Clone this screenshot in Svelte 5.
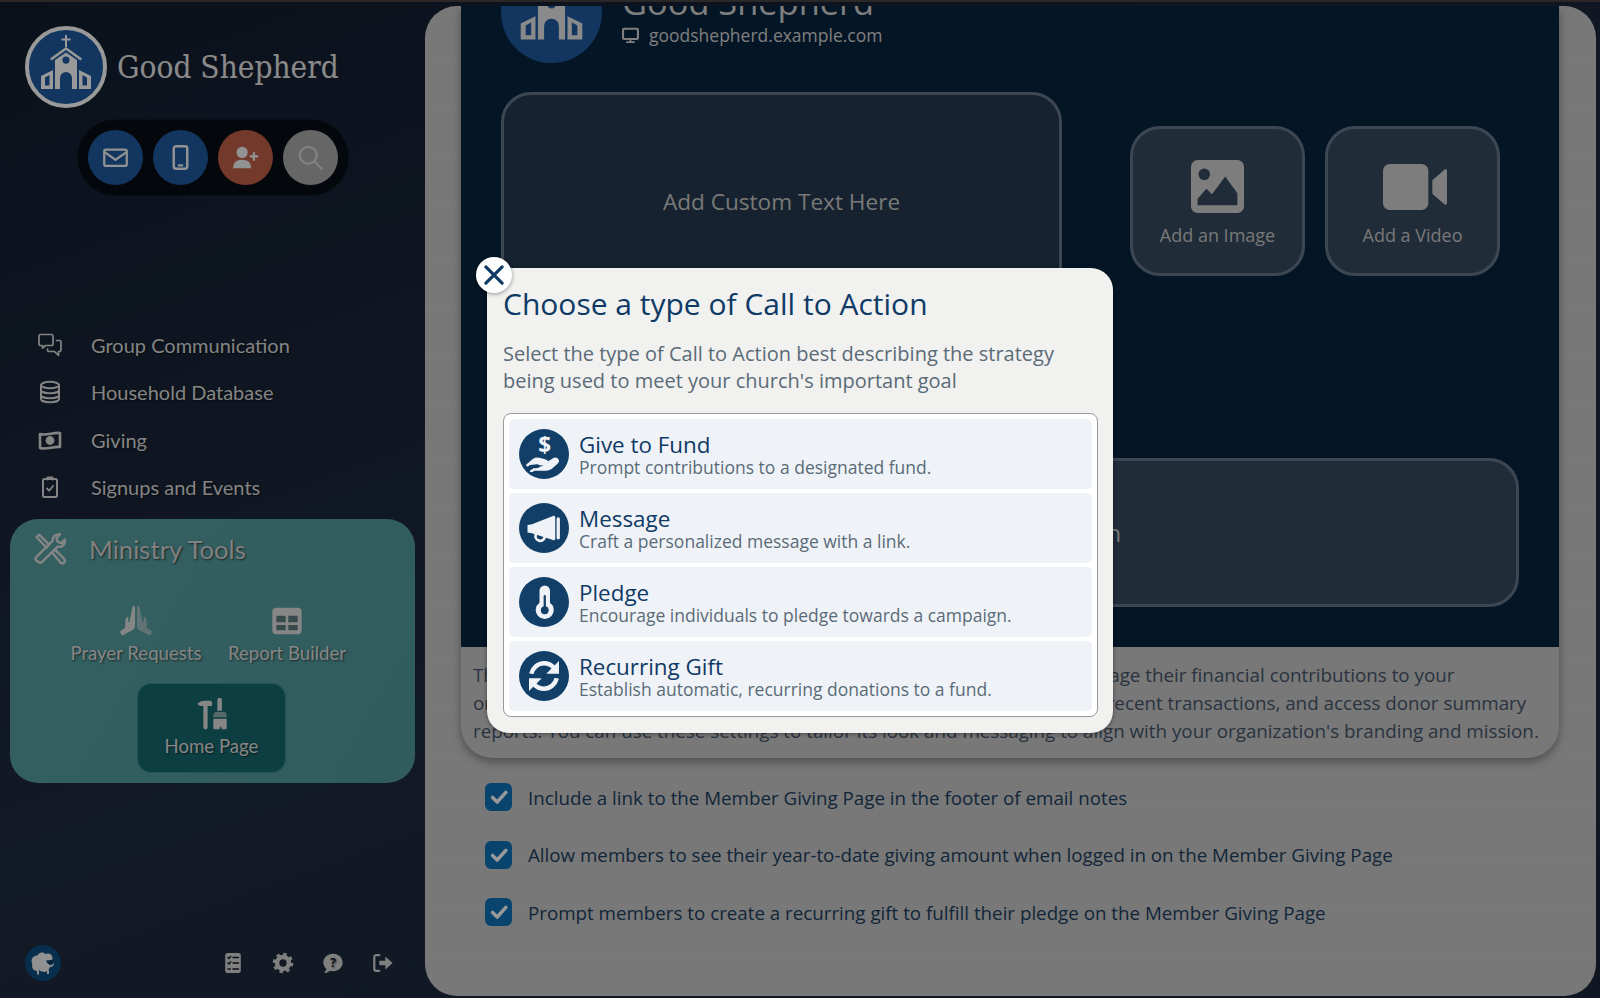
<script>
  const nav = [
    { label: "Group Communication", icon: "comments" },
    { label: "Household Database", icon: "database" },
    { label: "Giving", icon: "money" },
    { label: "Signups and Events", icon: "clipboard" },
  ];
  const tools = [
    { label: "Prayer Requests", icon: "hands" },
    { label: "Report Builder", icon: "table" },
    { label: "Home Page", icon: "hammer", active: true },
  ];
  const options = [
    "Include a link to the Member Giving Page in the footer of email notes",
    "Allow members to see their year-to-date giving amount when logged in on the Member Giving Page",
    "Prompt members to create a recurring gift to fulfill their pledge on the Member Giving Page",
  ];
  const types = [
    { title: "Give to Fund", sub: "Prompt contributions to a designated fund.", icon: "give" },
    { title: "Message", sub: "Craft a personalized message with a link.", icon: "megaphone" },
    { title: "Pledge", sub: "Encourage individuals to pledge towards a campaign.", icon: "thermo" },
    { title: "Recurring Gift", sub: "Establish automatic, recurring donations to a fund.", icon: "sync" },
  ];
</script>

{#snippet church(fill)}
  <svg viewBox="0 0 82 82" class="fillsvg">
    <g fill={fill}>
      <path d="M40 9h2v3.500h3.500v2H42V21h-2v-6.500h-3.500v-2H40z" />
      <path d="M25 32.500l16-11.500 16 11.500-1.500 1.900L41 24l-14.500 10.400z" />
      <path fill-rule="evenodd" d="M41 26.500l11 7.500v29H47V52a6 6 0 0 0-12 0v11H30V34zM41 30.500a3.600 3.600 0 1 0 0 7.200 3.600 3.600 0 0 0 0-7.200z" />
      <path fill-rule="evenodd" d="M28 44v19H16V50zM20 51.500v8h4.500v-10.500z" />
      <path fill-rule="evenodd" d="M54 44l12 6v13H54zM57.500 49v10.500H62v-8z" />
    </g>
  </svg>
{/snippet}

{#snippet ico(name)}
  <svg viewBox="0 0 24 24" class="ico" fill="none" stroke="currentColor" stroke-width="2" stroke-linecap="round" stroke-linejoin="round">
    {#if name === "mail"}
      <rect x="2" y="5" width="20" height="14.500" rx="1.500" />
      <path d="M2.500 7.500L12 14l9.500-6.500" />
    {:else if name === "phone"}
      <rect x="6" y="2" width="12" height="20" rx="2" stroke-width="2.200" />
      <path d="M10.500 19h3" />
    {:else if name === "userplus"}
      <circle cx="9" cy="7.500" r="5" fill="currentColor" stroke="none" />
      <path d="M1 21.500c0-5 3-7.500 8-7.500s8 2.500 8 7.500z" fill="currentColor" stroke="none" />
      <path d="M19.500 8v6M16.500 11h6" />
    {:else if name === "search"}
      <circle cx="10" cy="10" r="7.500" />
      <path d="M15.500 15.500L22 22" />
    {:else if name === "comments"}
      <path d="M2.500 1.500h11a1.500 1.500 0 0 1 1.500 1.500v8a1.500 1.500 0 0 1-1.500 1.500H7.500l-3 2.500v-2.500h-2A1.500 1.500 0 0 1 1 11V3a1.500 1.500 0 0 1 1.500-1.500z" stroke-width="1.700" />
      <path d="M18.500 7.500h3a1.500 1.500 0 0 1 1.500 1.500v8a1.500 1.500 0 0 1-1.500 1.500h-1v4l-4-4H11a1.500 1.500 0 0 1-1.500-1.500v-1" stroke-width="1.700" />
    {:else if name === "database"}
      <ellipse cx="12" cy="5" rx="9" ry="3.200" />
      <path d="M3 5v14c0 1.800 4 3.200 9 3.200s9-1.400 9-3.200V5M3 10c0 1.800 4 3.200 9 3.200s9-1.400 9-3.200M3 15c0 1.800 4 3.200 9 3.200s9-1.400 9-3.200" />
    {:else if name === "money"}
      <path d="M2 6c6 2 14-2 20-1v14c-6-1-14 3-20 1z" stroke-width="2.600" />
      <circle cx="12" cy="12.500" r="4.400" fill="currentColor" stroke="none" />
    {:else if name === "clipboard"}
      <rect x="5" y="4" width="14" height="18" rx="1.500" />
      <path d="M9.500 4.500V2.500h5v2M9 13.500l2.200 2.200L15 11" stroke-width="1.800" />
    {:else if name === "tools"}
      <path d="M4 21a2 2 0 0 1-1.500-3.500L14 6c-.5-2 1-4.500 5-4.500l-2.500 3 1 2.500 2.500.8 2.500-2.500c.5 3.500-2 5.800-5 5L6 21.500c-.7.400-1.400 0-2-.5z" stroke-width="1.700" />
      <path d="M2.500 3.500l2-1.500 5.500 5.500 1.500 1.500-2 2-1.500-1.500zM13.500 14.500l2-2 6.500 6.500c.8 1 .5 1.800 0 2.500s-1.600 1-2.500.2z" stroke-width="1.700" />
    {:else if name === "hands"}
      <path d="M9.500 1c.9-.5 1.800 0 1.800 1.200V15c0 2-.6 3.300-2.400 4.200L2.500 22.500c-.7.300-1.300.1-1.700-.6l-.5-1c-.3-.6-.1-1.200.4-1.500L4 17V12c0-1.600.7-2.700 2.200-3.500V12.500c0 .6 1 .6 1 0z" fill="currentColor" stroke="none" />
      <path d="M14.500 1c-.9-.5-1.800 0-1.800 1.200V15c0 2 .6 3.300 2.400 4.200l6.400 3.300c.7.300 1.300.1 1.700-.6l.5-1c.3-.6.100-1.200-.4-1.500L20 17V12c0-1.600-.7-2.700-2.200-3.500V12.500c0 .6-1 .6-1 0z" fill="currentColor" stroke="none" opacity=".55" />
    {:else if name === "table"}
      <rect x="1" y="2" width="22" height="20" rx="3" fill="currentColor" stroke="none" />
      <path d="M4 8h7v5H4zM13 8h7v5h-7zM4 15h7v4H4zM13 15h7v4h-7z" fill="#2f5b5d" stroke="none" opacity=".75" />
    {:else if name === "hammer"}
      <path d="M1 4.500C2 3 4 2 7 2h3.500c1 0 1.500.5 1.500 1.500V6H8.700v16a1.600 1.600 0 0 1-3.200 0V6H3z" fill="currentColor" stroke="none" />
      <path d="M16 1.500a1.700 1.700 0 0 1 3.400 0v8h-3.400z" fill="currentColor" stroke="none" />
      <path d="M14.500 10.500h6a2 2 0 0 1 2.500 2v2H13v-2.500z" fill="currentColor" stroke="none" opacity=".6" />
      <path d="M13 15.500h10V22.500a1 1 0 0 1-1 1h-2.500l-1-2.500-1 2.500H14a1 1 0 0 1-1-1z" fill="currentColor" stroke="none" />
    {:else if name === "checklist"}
      <rect x="3.500" y="1" width="17" height="22" rx="2.500" fill="currentColor" stroke="none" />
      <path d="M6.500 6l1 1 2-2M6.500 12l1 1 2-2M6.500 18.500h2.500M12 6h6M12 12h6M12 18.500h6" stroke="#101825" stroke-width="1.500" />
    {:else if name === "cog"}
      <circle cx="12" cy="12" r="6.500" stroke-width="5" />
      <circle cx="12" cy="12" r="9.500" stroke-width="3.500" stroke-dasharray="3.600 3.860" stroke-linecap="butt" />
    {:else if name === "question"}
      <path d="M12 2c6 0 10.500 4 10.500 9.500S18 21 12 21c-1.200 0-2.400-.2-3.500-.5C7 22 4.500 23 2 23c1.300-1.200 2.500-3 2.700-4.700C2.800 16.500 1.500 14.200 1.500 11.500 1.500 6 6 2 12 2z" fill="currentColor" stroke="none" />
      <text x="12" y="16" text-anchor="middle" font-size="13" font-weight="700" font-family="'Open Sans', sans-serif" fill="#101825" stroke="none">?</text>
    {:else if name === "signout"}
      <path d="M8 3.500H4.500A2 2 0 0 0 2.500 5.500v13a2 2 0 0 0 2 2H8" stroke-width="2.400" />
      <path d="M8 9.500h6.500V5l8 7-8 7v-4.500H8z" fill="currentColor" stroke="none" />
    {:else if name === "monitor"}
      <rect x="1.500" y="2.500" width="21" height="14.500" rx="1.500" stroke-width="3" />
      <path d="M12 17v4M7 21.500h10" stroke-width="2.500" />
    {:else if name === "image"}
      <rect x="0" y="0" width="24" height="24" rx="3" fill="currentColor" stroke="none" />
      <circle cx="6" cy="6.500" r="2.600" class="holefill" stroke="none" />
      <path d="M3 20.500v-3l4-4.500 2.500 2.500 6-8 5.500 7.500v5.500z" class="holefill" stroke="none" />
    {:else if name === "video"}
      <rect x="0" y="3.400" width="17" height="17.200" rx="2.500" fill="currentColor" stroke="none" />
      <path d="M18.500 9.500l4.500-4c.5-.300 1 0 1 .5v12c0 .5-.500.800-1 .500l-4.500-4z" fill="currentColor" stroke="none" />
    {:else if name === "give"}
      <text x="12.500" y="11.500" text-anchor="middle" font-size="15" font-weight="700" font-family="'Open Sans', sans-serif" fill="currentColor" stroke="none">$</text>
      <path d="M1 19.500l4-3.500c1.500-1 3-1 4.500-.5l3.500 1c1.500.5 1 2.200-.5 2.200H9M13.500 18.500l5-3c2-1 3.500 1 2 2.300l-4 3.500c-1 .7-2 1-3 1H5.500L3.500 23.500" stroke-width="1.700" fill="currentColor" />
    {:else if name === "megaphone"}
      <path d="M1 10l3-.5 14-5.500a1 1 0 0 1 1.500 1v14a1 1 0 0 1-1.500 1L4 15.500l-3-.5z" fill="currentColor" stroke="none" />
      <path d="M21.500 6v12.500" stroke-width="2.200" />
      <path d="M6.500 16.500a3 3 0 0 0 6 1.800" stroke-width="1.800" />
    {:else if name === "thermo"}
      <path d="M9 4.500a3.500 3.500 0 0 1 7 0v8a6 6 0 1 1-7 0z" fill="currentColor" stroke="none" />
      <path d="M12.500 8v9" stroke="#123f68" stroke-width="1.500" />
      <circle cx="12.500" cy="17.500" r="2.600" fill="#123f68" stroke="none" />
    {:else if name === "sync"}
      <path d="M3.500 10.500C4.500 6.500 8 3.500 12 3.500c2.800 0 5 1.200 6.600 3" stroke-width="3" stroke-linecap="butt" />
      <path d="M22 2v8.500h-8.500z" fill="currentColor" stroke="none" />
      <path d="M20.500 13.500c-1 4-4.500 7-8.500 7-2.800 0-5-1.200-6.600-3" stroke-width="3" stroke-linecap="butt" />
      <path d="M2 22v-8.500h8.500z" fill="currentColor" stroke="none" />
    {/if}
  </svg>
{/snippet}

<div class="app">
  <aside class="sidebar">
    <div class="brand">
      <div class="logo">{@render church("#ffffff")}</div>
      <span class="brand-name">Good Shepherd</span>
    </div>
    <div class="pill">
      <button class="round blue">{@render ico("mail")}</button>
      <button class="round blue">{@render ico("phone")}</button>
      <button class="round red">{@render ico("userplus")}</button>
      <button class="round gray">{@render ico("search")}</button>
    </div>

    <nav class="nav">
      {#each nav as item}
        <a class="nav-item" href="#top">
          <span class="nav-icon">{@render ico(item.icon)}</span>
          {item.label}
        </a>
      {/each}
    </nav>

    <section class="ministry">
      <div class="ministry-head">
        <span class="ministry-icon">{@render ico("tools")}</span>
        Ministry Tools
      </div>
      <div class="tool-grid">
        {#each tools as t}
          <a class="tool" class:active={t.active} href="#top">
            <span class="tool-icon">{@render ico(t.icon)}</span>
            <span>{t.label}</span>
          </a>
        {/each}
      </div>
    </section>

    <footer class="foot">
      <span class="sheep">
        <svg viewBox="0 0 36 36" class="fillsvg">
          <g fill="#f2f2f2">
            <circle cx="12" cy="16" r="5.500" /><circle cx="17" cy="12.500" r="5" /><circle cx="23" cy="13" r="4.500" />
            <circle cx="12" cy="21" r="5" /><circle cx="19" cy="21" r="6" /><circle cx="25" cy="18" r="4" />
            <path d="M12 25h2v4.500h-2zM22 25h2v4h-2z" />
          </g>
          <path d="M21 15.500l8.500-1c.5 2-1 5-3.500 5.500-2 .2-4-2-5-4.500z" fill="#123f68" />
        </svg>
      </span>
      <div class="foot-icons">
        {#each ["checklist", "cog", "question", "signout"] as n}
          <span class="foot-icon">{@render ico(n)}</span>
        {/each}
      </div>
    </footer>
  </aside>

  <main class="main">
    <div class="card">
      <div class="hero">
        <div class="profile">
          <div class="profile-logo">{@render church("#e6e6e6")}</div>
          <div class="profile-text">
            <div class="profile-name">Good Shepherd</div>
            <div class="profile-url"><span class="url-icon">{@render ico("monitor")}</span>goodshepherd.example.com</div>
          </div>
        </div>
        <div class="editor-row">
          <div class="slot text-slot">Add Custom Text Here</div>
          <div class="media">
            <div class="slot media-slot">
              <span class="media-icon">{@render ico("image")}</span>
              Add an Image
            </div>
            <div class="slot media-slot">
              <span class="media-icon video">{@render ico("video")}</span>
              Add a Video
            </div>
          </div>
        </div>
        <div class="slot cta-slot">Add a Call to Action</div>
      </div>
      <p class="blurb">
        The Member Giving Page is the secure online portal for members to manage their financial contributions to your<br />
        organization. Members can view giving history, set up other gifts, review recent transactions, and access donor summary<br />
        reports. You can use these settings to tailor its look and messaging to align with your organization's branding and mission.
      </p>
    </div>
    <div class="options">
      {#each options as o}
        <label class="option">
          <span class="check">
            <svg viewBox="0 0 24 24" width="22" height="22"><path d="M5 12.500l5 5L19.500 7" fill="none" stroke="#fff" stroke-width="3.800" stroke-linecap="round" stroke-linejoin="round" /></svg>
          </span>
          {o}
        </label>
      {/each}
    </div>
  </main>

  <div class="overlay"></div>
  <div class="modal">
    <button class="close" aria-label="Close">
      <svg viewBox="0 0 24 24" width="26" height="26"><path d="M4.500 4.500l15 15M19.500 4.500l-15 15" stroke="#0f3a66" stroke-width="3" stroke-linecap="round" /></svg>
    </button>
    <h2>Choose a type of Call to Action</h2>
    <p>Select the type of Call to Action best describing the strategy being used to meet your church's important goal</p>
    <div class="type-list">
      {#each types as t}
        <div class="type">
          <span class="type-icon">{@render ico(t.icon)}</span>
          <div class="type-text">
            <div class="type-title">{t.title}</div>
            <div class="type-sub">{t.sub}</div>
          </div>
        </div>
      {/each}
    </div>
  </div>
</div>

<style>
  :global(body) {
    margin: 0;
    background: #142136;
    font-family: "Open Sans", sans-serif;
  }
  button {
    border: none;
    padding: 0;
    font: inherit;
  }
  .app {
    display: flex;
    width: 1600px;
    height: 998px;
    box-sizing: border-box;
    border-top: 2px solid #474240;
    overflow: hidden;
    background: linear-gradient(160deg, #121d2e 0%, #1f2c40 55%, #1a2638 100%);
  }
  .ico {
    display: block;
    width: 100%;
    height: 100%;
  }
  .fillsvg {
    display: block;
    width: 100%;
    height: 100%;
  }

  /* sidebar */
  .sidebar {
    width: 425px;
    flex: none;
    display: flex;
    flex-direction: column;
    padding-top: 24px;
    box-sizing: border-box;
    color: #e6e6e6;
    font-family: Lato, sans-serif;
    text-shadow: 1px 1px 2px rgba(0, 0, 0, 0.6);
  }
  .brand {
    display: flex;
    align-items: center;
    gap: 10px;
    padding-left: 25px;
  }
  .logo {
    width: 82px;
    height: 82px;
    box-sizing: border-box;
    border: 4px solid #fff;
    border-radius: 50%;
    background: #1e5ba0;
    overflow: hidden;
    flex: none;
  }
  .logo .fillsvg {
    width: 82px;
    height: 82px;
    margin: -4px;
  }
  .brand-name {
    font-family: "DejaVu Serif Condensed", "DejaVu Serif", serif;
    font-size: 31.300px;
    color: #e6e6e6;
    text-shadow: none;
  }
  .pill {
    align-self: center;
    display: flex;
    gap: 10px;
    padding: 10px;
    margin-top: 12px;
    border-radius: 40px;
    background: #070c14;
    box-shadow: 0 0 0 1px #101722;
  }
  .round {
    width: 55px;
    height: 55px;
    border-radius: 50%;
    display: flex;
    align-items: center;
    justify-content: center;
    color: #f4f4f4;
  }
  .round .ico {
    width: 27px;
    height: 27px;
  }
  .blue { background: #1e5ba0; }
  .red { background: #c06149; }
  .gray { background: #aaaaaa; color: #d8d8d8; }

  .nav {
    margin-top: 126px;
    display: flex;
    flex-direction: column;
  }
  .nav-item {
    height: 47.500px;
    display: flex;
    align-items: center;
    color: #dcdcdc;
    text-decoration: none;
    font-size: 20px;
  }
  .nav-icon {
    width: 24px;
    height: 24px;
    margin-left: 38px;
    margin-right: 29px;
    color: #dcdcdc;
  }
  .ministry {
    margin: 8px 10px 0;
    height: 264px;
    box-sizing: border-box;
    padding-top: 12px;
    border-radius: 28px;
    background: linear-gradient(120deg, #57a0a3, #539a9d);
  }
  .ministry-head {
    display: flex;
    align-items: center;
    height: 36px;
    font-size: 25.700px;
    color: #d6d6d6;
  }
  .ministry-icon {
    width: 34px;
    height: 34px;
    margin-left: 23px;
    margin-right: 22px;
    color: #dcdcdc;
  }
  .tool-grid {
    display: flex;
    flex-wrap: wrap;
    justify-content: center;
    gap: 3px 2px;
    margin: 23px 2px 0 0;
  }
  .tool {
    width: 149px;
    height: 90px;
    box-sizing: border-box;
    display: flex;
    flex-direction: column;
    align-items: center;
    border: 1px solid transparent;
    border-radius: 14px;
    padding-top: 14px;
    color: #e0e0e0;
    text-decoration: none;
    font-size: 18.600px;
    gap: 5px;
  }
  .tool-icon {
    width: 34px;
    height: 32px;
    display: block;
  }
  .tool-icon .ico {
    margin: auto;
    width: 32px;
    height: 32px;
  }
  .tool.active {
    background: #17696e;
    border-color: #3c8a8e;
  }
  .foot {
    margin-top: auto;
    display: flex;
    align-items: center;
    justify-content: space-between;
    padding: 0 31px 17px 25px;
  }
  .sheep {
    width: 36px;
    height: 36px;
    border-radius: 50%;
    background: #0c4d80;
    display: block;
  }
  .foot-icons {
    display: flex;
    gap: 28px;
    color: #d4d4d4;
  }
  .foot-icon {
    width: 22px;
    height: 22px;
    display: block;
  }

  /* main */
  .main {
    flex: 1;
    margin: 4px 4px 2px 0;
    padding: 0 37px 0 36px;
    border-radius: 32px;
    background-color: #c8c8c8;
    background-image:
      linear-gradient(rgba(255, 255, 255, 0.05) 1px, transparent 1px),
      linear-gradient(90deg, rgba(255, 255, 255, 0.03) 1px, transparent 1px);
    background-size: 50px 50px;
    overflow: hidden;
  }
  .card {
    border-radius: 0 0 32px 32px;
    background: #c8c8c8;
    box-shadow: 0 4px 10px rgba(0, 0, 0, 0.35);
    overflow: hidden;
  }
  .hero {
    display: flow-root;
    height: 641px;
    box-sizing: border-box;
    padding: 0 40px;
    background: #08233e;
  }
  .profile {
    display: flex;
    gap: 20px;
    margin-top: -44px;
  }
  .profile-logo {
    width: 101px;
    height: 101px;
    flex: none;
    border-radius: 50%;
    background: #1e5ba0;
    overflow: hidden;
  }
  .profile-text {
    padding-top: 18px;
    color: #d4d4d4;
  }
  .profile-name {
    font-size: 34.400px;
    line-height: 42px;
    margin-top: 1px;
  }
  .profile-url {
    display: flex;
    align-items: center;
    font-size: 17.500px;
    line-height: 24px;
  }
  .url-icon {
    width: 17px;
    height: 17px;
    margin-right: 10px;
  }
  .editor-row {
    display: flex;
    align-items: center;
    margin-top: 29px;
  }
  .slot {
    box-sizing: border-box;
    border: 3px solid #66778c;
    border-radius: 30px;
    display: flex;
    align-items: center;
    justify-content: center;
    color: #c8c8c8;
  }
  .text-slot {
    width: 561px;
    height: 218px;
    background: #25394f;
    font-size: 22.600px;
  }
  .media {
    display: flex;
    gap: 20px;
    margin-left: 68px;
  }
  .media-slot {
    width: 175px;
    height: 150px;
    flex-direction: column;
    gap: 10px;
    padding-top: 5px;
    font-size: 18px;
    background: #374a60;
  }
  .media-icon {
    width: 53px;
    height: 53px;
    color: #d0d0d0;
  }
  .media-icon.video {
    width: 64px;
    margin-left: 4px;
  }
  .media-icon.video .ico {
    width: 64px;
    height: 64px;
    margin-top: -5px;
  }
  .holefill {
    fill: #374a60;
  }
  .cta-slot {
    margin-top: 148px;
    height: 149px;
    padding-left: 10px;
    background: #374a60;
    font-size: 23.500px;
  }
  .blurb {
    margin: 0;
    padding: 14px 0 13px 12px;
    font-size: 18.800px;
    line-height: 28px;
    white-space: nowrap;
    color: #46566a;
  }
  .options {
    margin: 25px 0 0 24px;
    display: flex;
    flex-direction: column;
    gap: 29.500px;
  }
  .option {
    display: flex;
    align-items: center;
    height: 28px;
    gap: 16px;
    font-size: 18.750px;
    color: #21405f;
  }
  .check {
    width: 27px;
    height: 28px;
    border-radius: 6px;
    background: #0f72ba;
    display: flex;
    align-items: center;
    justify-content: center;
  }

  /* modal */
  .overlay {
    position: absolute;
    inset: 0;
    background: rgba(0, 0, 0, 0.4);
  }
  .modal {
    position: absolute;
    left: 487px;
    top: 268px;
    width: 626px;
    height: 465px;
    box-sizing: border-box;
    padding: 15px 15px 0 16px;
    border-radius: 22px;
    background: #f1f1ef;
    box-shadow: 0 1px 4px rgba(0, 0, 0, 0.4);
  }
  .close {
    position: absolute;
    left: -11px;
    top: -11px;
    width: 36px;
    height: 36px;
    border-radius: 50%;
    background: #fff;
    display: flex;
    align-items: center;
    justify-content: center;
    box-shadow: 0 1px 4px rgba(0, 0, 0, 0.4);
  }
  .modal h2 {
    margin: 0;
    font-size: 30px;
    line-height: 42px;
    font-weight: 400;
    color: #0f3a66;
  }
  .modal p {
    margin: 15px 0 0;
    font-size: 20px;
    line-height: 27px;
    color: #5a6b78;
  }
  .type-list {
    margin-top: 19px;
    box-sizing: border-box;
    display: flex;
    flex-direction: column;
    gap: 4.500px;
    padding: 5px;
    border: 1px solid #9a9a9a;
    border-radius: 8px;
    background: #fff;
  }
  .type {
    height: 69.500px;
    flex: none;
    display: flex;
    align-items: center;
    gap: 10px;
    padding-left: 10px;
    border-radius: 5px;
    background: #eff3f7;
  }
  .type-icon {
    width: 50px;
    height: 50px;
    box-sizing: border-box;
    padding: 7px;
    border-radius: 50%;
    background: #123f68;
    color: #eff3f7;
    flex: none;
  }
  .type-title {
    font-size: 22.400px;
    line-height: 27px;
    color: #0f3a66;
  }
  .type-sub {
    font-size: 17.500px;
    line-height: 19px;
    color: #5a6b78;
  }
</style>
